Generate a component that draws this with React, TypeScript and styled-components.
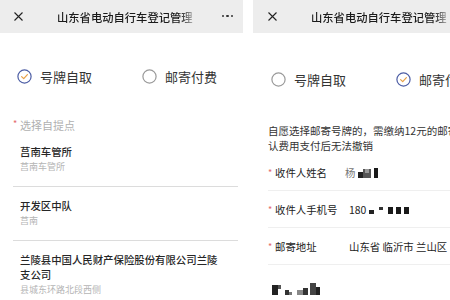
import React from "react";
import styled, { createGlobalStyle } from "styled-components";

const Global = createGlobalStyle`
  html, body { margin: 0; padding: 0; background: #fff; }
  body { font-family: "Noto Sans CJK SC", "Noto Sans", sans-serif; }
`;

const Page = styled.div`
  width: 450px;
  height: 300px;
  overflow: hidden;
  display: flex;
  align-items: flex-start;
  gap: 10px;
  background: #fff;
`;

const Panel = styled.div`
  width: 243px;
  flex-shrink: 0;
  display: flex;
  flex-direction: column;
  & > * {
    flex-shrink: 0;
  }
`;

const Header = styled.div<{ $pl: number }>`
  height: 33px;
  background: #ededed;
  display: flex;
  align-items: center;
  padding-left: ${(p) => p.$pl}px;
`;

const Title = styled.div`
  margin-left: 34px;
  width: 142px;
  font-size: 11.3px;
  font-weight: 500;
  color: #1b1b1b;
  white-space: nowrap;
  overflow: hidden;
  -webkit-mask-image: linear-gradient(to right, #000 86%, transparent 100%);
  mask-image: linear-gradient(to right, #000 86%, transparent 100%);
`;

const More = styled.div`
  margin-left: auto;
  margin-right: 10px;
  display: flex;
  gap: 2px;
  padding-bottom: 1px;
`;

const Dot = styled.span`
  width: 2.5px;
  height: 2.5px;
  border-radius: 50%;
  background: #333;
`;

const RadioRow = styled.div<{ $top: number; $pl: number }>`
  display: flex;
  align-items: center;
  margin-top: ${(p) => p.$top}px;
  padding-left: ${(p) => p.$pl}px;
  height: 18px;
  gap: 50px;
`;

const Radio = styled.div`
  display: flex;
  align-items: center;
  gap: 8px;
  font-size: 13px;
  color: #333;
  white-space: nowrap;
`;

const Label = styled.div`
  margin: 32px 0 0 13px;
  font-size: 11px;
  line-height: 16px;
  color: #b0b0b0;
  display: flex;
  align-items: flex-start;
`;

const Star = styled.span`
  color: #e46a6a;
  font-size: 9px;
  width: 7px;
  line-height: 14px;
`;

const List = styled.div`
  margin: 11px 5px 0 13px;
  display: flex;
  flex-direction: column;
`;

const Item = styled.div`
  padding: 0 14px 13px 7px;
  & + & {
    padding-top: 11px;
  }
  border-bottom: 1px solid #dcdcdc;
  &:last-child {
    border-bottom: none;
  }
`;

const ItemTitle = styled.div`
  font-size: 10.4px;
  line-height: 15px;
  font-weight: 500;
  color: #262626;
`;

const ItemSub = styled.div`
  margin-top: 1px;
  font-size: 9px;
  line-height: 13px;
  color: #b5b5b5;
`;

const Notice = styled.div`
  margin: 35px 0 1px 15px;
  font-size: 10.5px;
  line-height: 15px;
  color: #333;
  white-space: nowrap;
`;

const Fields = styled.div`
  margin-left: 15px;
  display: flex;
  flex-direction: column;
`;

const Field = styled.div`
  display: grid;
  grid-template-columns: 77px 1fr;
  align-items: center;
  padding: 11px 0 10px;
  border-bottom: 1px solid #efefef;
  font-size: 10.4px;
  line-height: 15px;
  color: #222;
`;

const FieldLabel = styled.div`
  display: flex;
  align-items: center;
  white-space: nowrap;
`;

const FieldValue = styled.div<{ $pl: number }>`
  display: flex;
  align-items: center;
  padding-left: ${(p) => p.$pl}px;
  white-space: nowrap;
  gap: 2px;
`;

const Blurred = styled.span`
  color: #777;
`;

const Mosaic = styled.div`
  margin: 13px 0 0 19px;
`;

const CloseIcon = () => (
  <svg width="9" height="9" viewBox="0 0 9 9">
    <path d="M0.5 0.5 L8.5 8.5 M8.5 0.5 L0.5 8.5" stroke="#222" strokeWidth="1.1" />
  </svg>
);

const Circle = ({ checked }: { checked: boolean }) => (
  <svg width="15" height="15" viewBox="0 0 15 15">
    <circle cx="7.5" cy="7.5" r="6.6" fill="none" stroke={checked ? "#4d5ea5" : "#9a9a9a"} strokeWidth="1.2" />
    {checked && (
      <path d="M4.6 7.6 L6.7 9.6 L10.4 5.6" fill="none" stroke="#e8a046" strokeWidth="1.2" strokeLinecap="round" strokeLinejoin="round" />
    )}
  </svg>
);

const PanelHeader = ({ pl }: { pl: number }) => (
  <Header $pl={pl}>
    <CloseIcon />
    <Title>山东省电动自行车登记管理</Title>
    <More>
      <Dot />
      <Dot />
      <Dot />
    </More>
  </Header>
);

export default function App() {
  return (
    <>
      <Global />
      <Page>
        <Panel>
          <PanelHeader pl={14} />
          <RadioRow $top={34} $pl={17}>
            <Radio>
              <Circle checked />
              号牌自取
            </Radio>
            <Radio>
              <Circle checked={false} />
              邮寄付费
            </Radio>
          </RadioRow>
          <Label>
            <Star>*</Star>选择自提点
          </Label>
          <List>
            <Item>
              <ItemTitle>莒南车管所</ItemTitle>
              <ItemSub>莒南车管所</ItemSub>
            </Item>
            <Item>
              <ItemTitle>开发区中队</ItemTitle>
              <ItemSub>莒南</ItemSub>
            </Item>
            <Item>
              <ItemTitle>兰陵县中国人民财产保险股份有限公司兰陵支公司</ItemTitle>
              <ItemSub>县城东环路北段西侧</ItemSub>
            </Item>
          </List>
        </Panel>
        <Panel>
          <PanelHeader pl={15} />
          <RadioRow $top={37} $pl={18}>
            <Radio>
              <Circle checked={false} />
              号牌自取
            </Radio>
            <Radio>
              <Circle checked />
              邮寄付费
            </Radio>
          </RadioRow>
          <Notice>
            自愿选择邮寄号牌的，需缴纳12元的邮寄费用，确
            <br />
            认费用支付后无法撤销
          </Notice>
          <Fields>
            <Field>
              <FieldLabel>
                <Star>*</Star>收件人姓名
              </FieldLabel>
              <FieldValue $pl={0}>
                <Blurred>杨</Blurred>
                <svg width="24" height="12" viewBox="0 0 24 12">
                  <rect x="1" y="5" width="5" height="6" fill="#222" />
                  <rect x="6" y="2" width="8" height="9" fill="#555" />
                  <rect x="8" y="2" width="4" height="4" fill="#999" />
                  <rect x="17" y="1" width="4" height="10" fill="#1a1a1a" />
                </svg>
              </FieldValue>
            </Field>
            <Field>
              <FieldLabel>
                <Star>*</Star>收件人手机号
              </FieldLabel>
              <FieldValue $pl={4}>
                180
                <svg width="44" height="10" viewBox="0 0 44 10">
                  <rect x="1" y="5" width="5" height="4" fill="#222" />
                  <rect x="11" y="2" width="4" height="3" fill="#333" />
                  <rect x="20" y="2" width="5" height="7" fill="#1a1a1a" />
                  <rect x="28" y="2" width="5" height="7" fill="#1a1a1a" />
                  <rect x="36" y="2" width="5" height="7" fill="#1a1a1a" />
                </svg>
              </FieldValue>
            </Field>
            <Field>
              <FieldLabel>
                <Star>*</Star>邮寄地址
              </FieldLabel>
              <FieldValue $pl={4}>山东省 临沂市 兰山区</FieldValue>
            </Field>
          </Fields>
          <Mosaic>
            <svg width="50" height="14" viewBox="0 0 50 14">
              <rect x="0" y="2" width="6" height="10" fill="#222" />
              <rect x="6" y="2" width="3" height="4" fill="#555" />
              <rect x="13" y="7" width="4" height="5" fill="#333" />
              <rect x="17" y="9" width="3" height="3" fill="#777" />
              <rect x="25" y="7" width="6" height="5" fill="#888" />
              <rect x="31" y="5" width="5" height="7" fill="#333" />
              <rect x="38" y="0" width="6" height="12" fill="#444" />
              <rect x="44" y="4" width="4" height="8" fill="#222" />
            </svg>
          </Mosaic>
        </Panel>
      </Page>
    </>
  );
}
